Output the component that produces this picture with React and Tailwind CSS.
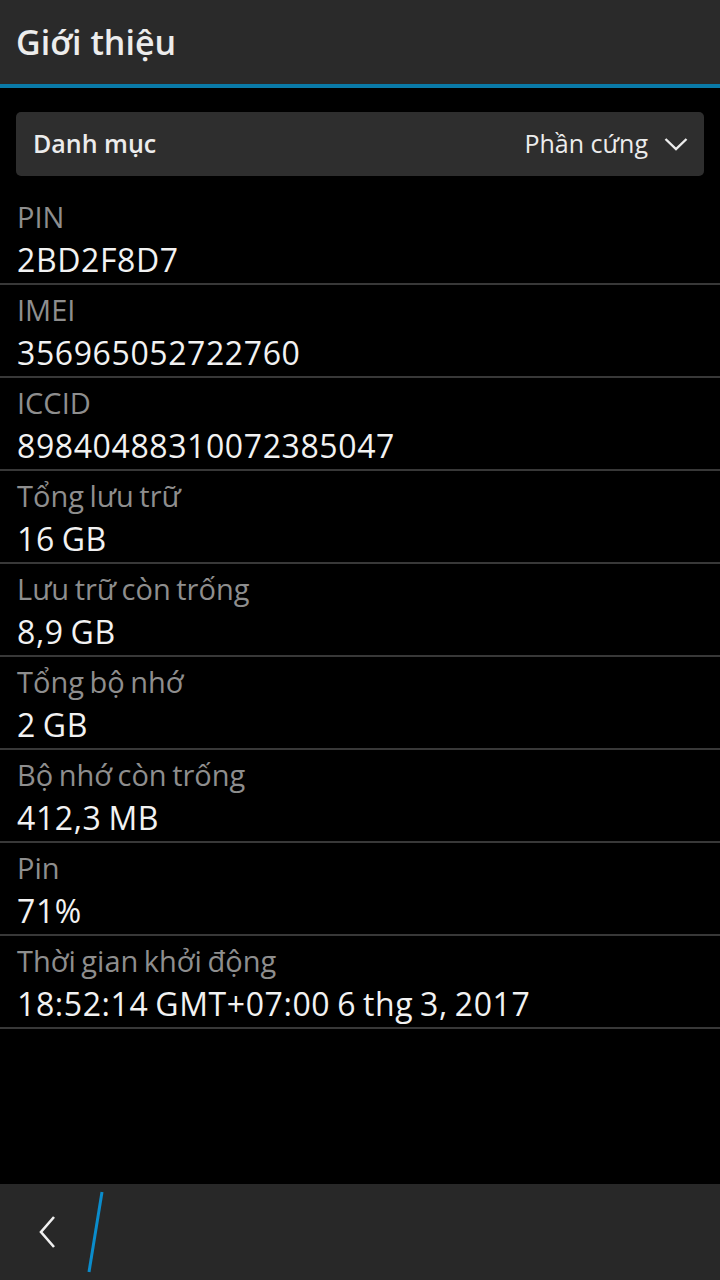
import React from 'react';

const rows = [
  { label: 'PIN', value: '2BD2F8D7' },
  { label: 'IMEI', value: '356965052722760' },
  { label: 'ICCID', value: '89840488310072385047' },
  { label: 'Tổng lưu trữ', value: '16 GB' },
  { label: 'Lưu trữ còn trống', value: '8,9 GB' },
  { label: 'Tổng bộ nhớ', value: '2 GB' },
  { label: 'Bộ nhớ còn trống', value: '412,3 MB' },
  { label: 'Pin', value: '71%' },
  { label: 'Thời gian khởi động', value: '18:52:14 GMT+07:00 6 thg 3, 2017' },
];

export default function App() {
  return (
    <div className="h-[1280px] w-[720px] flex flex-col bg-black text-white font-['Open_Sans','Noto_Sans',sans-serif]">
      {/* title bar */}
      <div className="h-[84px] bg-[#2a2a2a] flex items-center px-[16px]">
        <h1 className="text-[34px] font-semibold text-[#ececec] leading-none">Giới thiệu</h1>
      </div>
      <div className="h-[4px] bg-[#0a7aa8]" />

      <div className="flex-1">
        {/* category picker */}
        <div className="mx-[16px] mt-[24px] h-[64px] rounded-[5px] bg-[#2e2e2e] flex items-center justify-between pl-[17px] pr-[16px]">
          <span className="text-[25px] font-semibold text-[#ececec]">Danh mục</span>
          <div className="flex items-center gap-[16px]">
            <span className="text-[25px] text-[#ececec]">Phần cứng</span>
            <svg width="24" height="16" viewBox="0 0 24 16" fill="none">
              <path d="M1.5 3 L12 13 L22.5 3" stroke="#ececec" strokeWidth="2.4" />
            </svg>
          </div>
        </div>

        <div className="mt-[16px]">
          {rows.map((r) => (
            <div key={r.label} className="h-[93px] border-b-2 border-[#383838] pl-[17px] pt-[8px]">
              <div className="text-[29px] leading-[34px] text-[#8e8e8e] [word-spacing:-2px]">{r.label}</div>
              <div className="text-[32px] leading-[42px] mt-[5px] text-[#f2f2f2] tracking-[0.6px] [word-spacing:-2px]">{r.value}</div>
            </div>
          ))}
        </div>
      </div>

      {/* action bar */}
      <div className="h-[96px] bg-[#282828] flex items-center">
        <div className="w-[96px] flex justify-center">
          <svg width="20" height="34" viewBox="0 0 20 34" fill="none">
            <path d="M16 2 L3 17 L16 32" stroke="#f0f0f0" strokeWidth="2.6" />
          </svg>
        </div>
        <svg width="20" height="84" viewBox="0 0 20 84" fill="none" className="-ml-[10px]">
          <path d="M16 2 L3 82" stroke="#0a8ccc" strokeWidth="3" />
        </svg>
      </div>
    </div>
  );
}
